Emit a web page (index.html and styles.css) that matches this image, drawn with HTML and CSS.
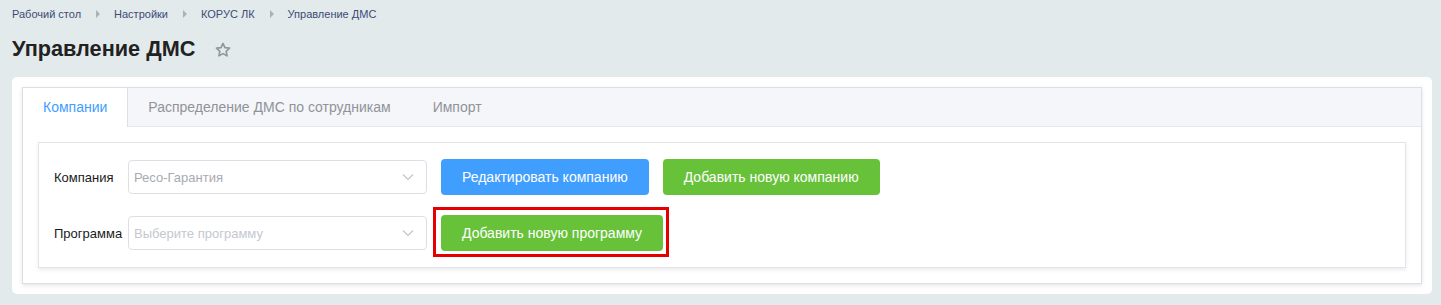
FILE: index.html
```html
<!DOCTYPE html>
<html lang="ru">
<head>
<meta charset="utf-8">
<title>Управление ДМС</title>
<link rel="stylesheet" href="styles.css">
</head>
<body>
<div class="page">
  <nav class="breadcrumbs">
    <a class="crumb">Рабочий стол</a>
    <span class="sep"></span>
    <a class="crumb">Настройки</a>
    <span class="sep"></span>
    <a class="crumb">КОРУС ЛК</a>
    <span class="sep"></span>
    <a class="crumb">Управление ДМС</a>
  </nav>
  <div class="title-row">
    <h1 class="title">Управление ДМС</h1>
    <svg class="star" width="18" height="18" viewBox="0 0 24 24"><path d="M12 3.2l2.6 5.6 6.1.7-4.5 4.2 1.2 6.1L12 16.8l-5.4 3 1.2-6.1-4.5-4.2 6.1-.7z" fill="none" stroke="#8f969e" stroke-width="2.2" stroke-linejoin="round"/></svg>
  </div>
  <section class="card">
    <div class="tabs">
      <div class="tab-header">
        <div class="tab active">Компании</div>
        <div class="tab">Распределение ДМС по сотрудникам</div>
        <div class="tab">Импорт</div>
      </div>
      <div class="tab-content">
        <div class="form-box">
          <div class="form-row">
            <label class="label">Компания</label>
            <div class="select">
              <span class="value">Ресо-Гарантия</span>
              <svg class="chev" width="12" height="8" viewBox="0 0 12 8"><path d="M1 1.5l5 5 5-5" fill="none" stroke="#c0c4cc" stroke-width="1.2"/></svg>
            </div>
            <button class="btn btn-primary">Редактировать компанию</button>
            <button class="btn btn-success">Добавить новую компанию</button>
          </div>
          <div class="form-row">
            <label class="label">Программа</label>
            <div class="select">
              <span class="placeholder">Выберите программу</span>
              <svg class="chev" width="12" height="8" viewBox="0 0 12 8"><path d="M1 1.5l5 5 5-5" fill="none" stroke="#c0c4cc" stroke-width="1.2"/></svg>
            </div>
            <div class="highlight-wrap">
              <button class="btn btn-success">Добавить новую программу</button>
              <span class="highlight"></span>
            </div>
          </div>
        </div>
      </div>
    </div>
  </section>
</div>
</body>
</html>
```

FILE: styles.css
```css
* { box-sizing: border-box; }
html, body { margin: 0; padding: 0; }
body {
  background: #e3eaec;
  font-family: "Liberation Sans", Arial, sans-serif;
  color: #222;
}
.page {
  padding: 0 9px 12px 12px;
}
.breadcrumbs {
  display: flex;
  align-items: center;
  height: 28px;
  font-size: 11px;
  color: #3b4a74;
}
.crumb { color: #3b4a74; text-decoration: none; }
.sep {
  width: 0; height: 0;
  border-top: 4px solid transparent;
  border-bottom: 4px solid transparent;
  border-left: 4px solid #aab1b8;
  margin: 0 14px 0 15px;
}
.title-row {
  display: flex;
  align-items: center;
  height: 28px;
  margin-top: 7px;
  margin-bottom: 14px;
}
.title {
  margin: 0;
  font-size: 21.7px;
  font-weight: bold;
  color: #222;
  line-height: 28px;
}
.star { margin-left: 19px; margin-top: 1px; }
.card {
  background: #fff;
  border-radius: 5px;
  padding: 10px;
}
.tabs {
  border: 1px solid #dcdfe6;
  box-shadow: 0 2px 4px rgba(0,0,0,.08), 0 0 6px rgba(0,0,0,.03);
  background: #fff;
}
.tab-header {
  display: flex;
  background: #f5f6fa;
  border-bottom: 1px solid #e4e7ed;
  height: 39px;
}
.tab {
  height: 39px;
  line-height: 38px;
  padding: 0 20px;
  font-size: 14px;
  color: #909399;
  border-right: 1px solid transparent;
  margin-right: 1px;
}
.tab.active {
  background: #fff;
  color: #409eff;
  border-right-color: #dcdfe6;
  height: 39px;
  margin-right: 0;
}
.tab-content { padding: 15px; }
.form-box {
  border: 1px solid #e1e4ea;
  box-shadow: 0 2px 4px rgba(0,0,0,.08);
  padding: 16px 15px 16px 15px;
  display: flex;
  flex-direction: column;
  gap: 20px;
}
.form-row {
  display: flex;
  align-items: center;
  height: 36px;
}
.label {
  width: 74px;
  font-size: 13px;
  color: #1a1a1a;
}
.select {
  width: 299px;
  height: 34px;
  border: 1px solid #dcdfe6;
  border-radius: 4px;
  display: flex;
  align-items: center;
  justify-content: space-between;
  padding: 0 12px 0 5px;
  font-size: 13px;
  margin-right: 14px;
}
.value { color: #a8abb2; }
.placeholder { color: #c4c8cf; }
.btn {
  height: 36px;
  padding: 0 21px;
  border: none;
  border-radius: 4px;
  color: #fff;
  font-family: "Liberation Sans", Arial, sans-serif;
  font-size: 14px;
  cursor: pointer;
}
.btn-primary { background: #409eff; margin-right: 14px; }
.btn-success { background: #67c23a; }
.highlight-wrap { position: relative; display: flex; }
.highlight {
  position: absolute;
  left: -8px; top: -8px; right: -6px; bottom: -6px;
  border: 3px solid #e50000;
  pointer-events: none;
}
```
